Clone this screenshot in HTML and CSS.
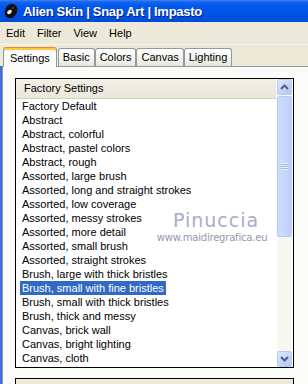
FILE: index.html
```html
<!DOCTYPE html>
<html>
<head>
<meta charset="utf-8">
<link rel="stylesheet" href="styles.css">
</head>
<body>
<div class="window">
  <div class="titlebar">
    <svg class="appicon" width="15" height="16" viewBox="0 0 15 16">
      <ellipse cx="8" cy="8" rx="6" ry="7.5" transform="rotate(28 8 8)" fill="#111"/>
      <ellipse cx="6.5" cy="9" rx="2.6" ry="1.8" transform="rotate(-35 6.5 9)" fill="#f4f4f4"/>
      <ellipse cx="10" cy="5" rx="1.2" ry="0.8" fill="#555"/>
    </svg>
    <span class="title">Alien Skin | Snap Art | Impasto</span>
  </div>
  <div class="menubar">
    <span class="menu">Edit</span>
    <span class="menu">Filter</span>
    <span class="menu">View</span>
    <span class="menu">Help</span>
  </div>
  <div class="tabs">
    <div class="tab active">Settings</div>
    <div class="tab">Basic</div>
    <div class="tab">Colors</div>
    <div class="tab">Canvas</div>
    <div class="tab">Lighting</div>
  </div>
  <div class="panelrow">
    <div class="lframe"></div>
    <div class="panel">
      <div class="listbox">
        <div class="listmain">
          <div class="listhead">Factory Settings</div>
          <div class="rows">
            <div class="row"><span>Factory Default</span></div>
            <div class="row"><span>Abstract</span></div>
            <div class="row"><span>Abstract, colorful</span></div>
            <div class="row"><span>Abstract, pastel colors</span></div>
            <div class="row"><span>Abstract, rough</span></div>
            <div class="row"><span>Assorted, large brush</span></div>
            <div class="row"><span>Assorted, long and straight strokes</span></div>
            <div class="row"><span>Assorted, low coverage</span></div>
            <div class="row"><span>Assorted, messy strokes</span></div>
            <div class="row"><span>Assorted, more detail</span></div>
            <div class="row"><span>Assorted, small brush</span></div>
            <div class="row"><span>Assorted, straight strokes</span></div>
            <div class="row"><span>Brush, large with thick bristles</span></div>
            <div class="row selected"><span>Brush, small with fine bristles</span></div>
            <div class="row"><span>Brush, small with thick bristles</span></div>
            <div class="row"><span>Brush, thick and messy</span></div>
            <div class="row"><span>Canvas, brick wall</span></div>
            <div class="row"><span>Canvas, bright lighting</span></div>
            <div class="row"><span>Canvas, cloth</span></div>
          </div>
        </div>
        <div class="scrollbar">
          <div class="sbtn">
            <svg width="9" height="6" viewBox="0 0 9 6"><path d="M1 5 L4.5 1.5 L8 5" fill="none" stroke="#4d6185" stroke-width="2"/></svg>
          </div>
          <div class="thumb">
            <div class="grip"></div>
          </div>
          <div class="track"></div>
          <div class="sbtn">
            <svg width="9" height="6" viewBox="0 0 9 6"><path d="M1 1 L4.5 4.5 L8 1" fill="none" stroke="#4d6185" stroke-width="2"/></svg>
          </div>
        </div>
      </div>
      <div class="lowerbox"></div>
    </div>
    <div class="rgap"></div>
    <div class="rframe"></div>
  </div>
  <div class="watermark">
    <div class="wm1">Pinuccia</div>
    <div class="wm2">www.maidiregrafica.eu</div>
  </div>
</div>
</body>
</html>
```

FILE: styles.css
```css
html, body {
  margin: 0;
  padding: 0;
}
body {
  width: 308px;
  height: 384px;
  overflow: hidden;
  background: #ece9d8;
  font-family: "Liberation Sans", Arial, sans-serif;
  font-size: 11px;
  color: #000;
}
.window {
  position: relative;
  width: 308px;
  height: 384px;
  display: flex;
  flex-direction: column;
}
.titlebar {
  height: 22px;
  flex: none;
  display: flex;
  align-items: center;
  gap: 5px;
  padding-left: 3px;
  background: linear-gradient(#3d87f5 0, #1663ee 2px, #0058ee 6px, #0054e3 14px, #004ad8 22px);
}
.appicon {
  flex: none;
}
.title {
  color: #fff;
  font-weight: bold;
  font-size: 13px;
  letter-spacing: -0.3px;
  line-height: 16px;
  padding-top: 1px;
  text-shadow: 1px 1px 0 #0a1e8a;
}
.menubar {
  height: 22px;
  flex: none;
  display: flex;
  align-items: center;
  border-bottom: 1px solid #f6f5ef;
  margin-bottom: 1px;
}
.menu {
  padding: 0 6px;
}
.tabs {
  height: 21px;
  flex: none;
  display: flex;
  align-items: flex-end;
  padding-left: 3px;
  position: relative;
  z-index: 2;
  margin-bottom: -1px;
}
.tab {
  height: 17px;
  line-height: 17px;
  padding: 0 4px;
  border: 1px solid #919b9c;
  border-bottom: none;
  border-radius: 3px 3px 0 0;
  background: linear-gradient(#ffffff, #f1f0ea 70%, #e6e4da);
  margin-bottom: 1px;
}
.tab.active {
  height: 19px;
  line-height: 20px;
  margin-bottom: 0;
  padding: 0 6px;
  border-top: 1px solid #e68b2c;
  box-shadow: inset 0 2px 0 #ffc83c;
  background: #fcfcfe;
  margin-right: 1px;
}
.panelrow {
  flex: 1;
  display: flex;
  min-height: 0;
}
.lframe {
  width: 2px;
  flex: none;
  background: #3c6fdc;
}
.panel {
  width: 299px;
  flex: none;
  border: 1px solid #919b9c;
  border-bottom: none;
  background: #fbfbf9;
  padding: 11px 0 0 12px;
  box-sizing: content-box;
}
.rgap {
  width: 2px;
  flex: none;
}
.rframe {
  width: 3px;
  flex: none;
  background: #e49292;
}
.listbox {
  width: 277px;
  height: 288px;
  border: 1px solid #000;
  background: #fff;
  display: flex;
}
.listmain {
  flex: 1;
  display: flex;
  flex-direction: column;
  min-width: 0;
  overflow: hidden;
}
.listhead {
  height: 19px;
  flex: none;
  line-height: 19px;
  padding-left: 8px;
  background: linear-gradient(#f1efe4, #ebe9dc);
  border-bottom: 1px solid #d2cfbc;
  border-right: 1px solid #fff;
}
.rows {
  flex: 1;
  overflow: hidden;
}
.row {
  height: 14px;
  line-height: 14px;
  padding-left: 4px;
  white-space: nowrap;
}
.row span {
  display: inline-block;
  padding: 0 2px;
}
.row.selected span {
  background: #316ac5;
  color: #fff;
}
.scrollbar {
  width: 15px;
  flex: none;
  margin-right: 1px;
  display: flex;
  flex-direction: column;
  background: #f7f7f1;
}
.sbtn {
  height: 16px;
  flex: none;
  border: 1px solid #b7cbf6;
  border-radius: 2px;
  background: linear-gradient(135deg, #dde8fe, #c2d4fb 60%, #b3c8f5);
  box-sizing: border-box;
  display: flex;
  align-items: center;
  justify-content: center;
}
.thumb {
  height: 141px;
  flex: none;
  margin-top: 1px;
  border: 1px solid #b8cbf5;
  border-radius: 2px;
  background: linear-gradient(90deg, #cddcfc, #c6d7fb 50%, #bed0f8);
  box-sizing: border-box;
  display: flex;
  align-items: center;
  justify-content: center;
}
.grip {
  width: 7px;
  height: 7px;
  background: repeating-linear-gradient(#eef3ff 0, #eef3ff 1px, #9bb4ea 1px, #9bb4ea 2px);
}
.track {
  flex: 1;
}
.lowerbox {
  width: 277px;
  height: 20px;
  margin-top: 10px;
  border: 1px solid #000;
  background: #ece9d8;
}
.watermark {
  position: absolute;
  left: 154px;
  top: 208px;
  width: 116px;
  text-align: center;
  color: #a8adc6;
}
.wm1 {
  font-family: "DejaVu Sans", sans-serif;
  font-size: 19px;
  letter-spacing: 1px;
  line-height: 24px;
  padding-left: 8px;
}
.wm2 {
  font-family: "DejaVu Sans", sans-serif;
  font-size: 10px;
  line-height: 11px;
  color: #9197b0;
  letter-spacing: -0.2px;
}
```
